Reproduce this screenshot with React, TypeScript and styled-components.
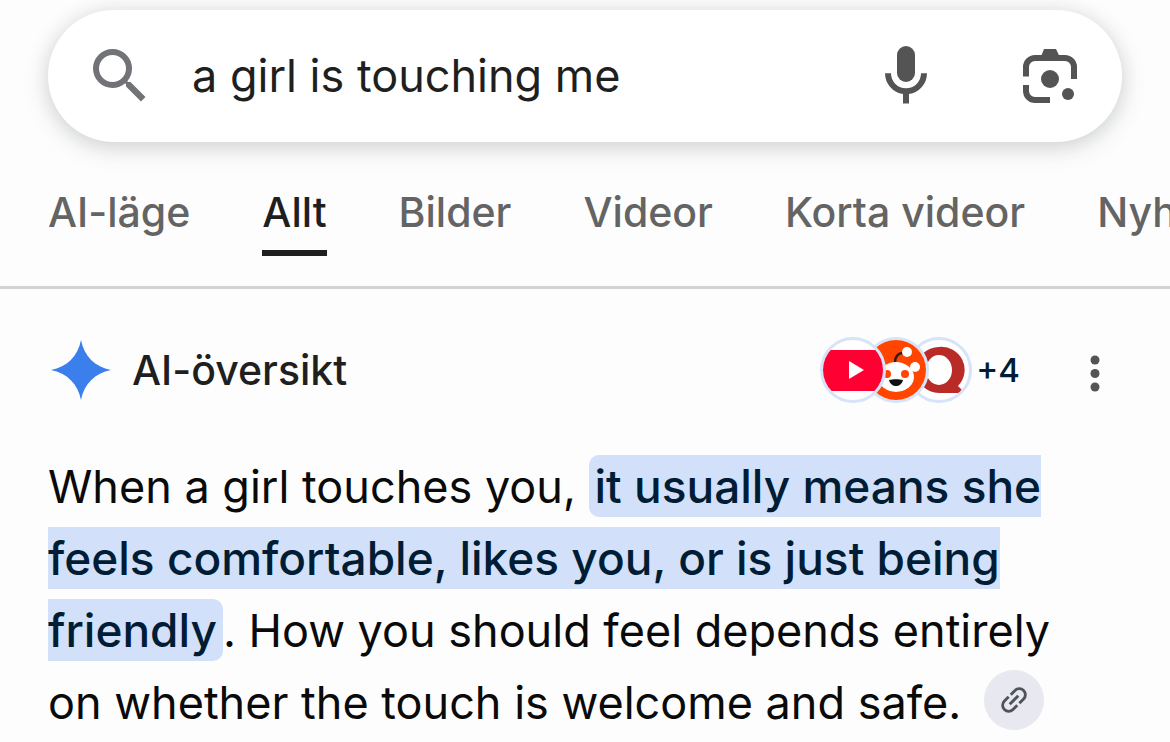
import React, { useState } from "react";
import styled, { createGlobalStyle } from "styled-components";

const GlobalStyle = createGlobalStyle`
  * { box-sizing: border-box; }
  body {
    margin: 0;
    background: #fdfdfd;
    color: #0a0a0a;
    font-family: Inter, Roboto, sans-serif;
    overflow-x: hidden;
  }
`;

const Page = styled.div`
  padding-top: 10px;
`;

const SearchBar = styled.form`
  display: flex;
  align-items: center;
  height: 132px;
  margin: 0 48px;
  padding: 0 36px;
  border-radius: 66px;
  background: #fff;
  box-shadow: 0 6px 24px rgba(60, 64, 67, 0.2), 0 0 18px rgba(60, 64, 67, 0.07);
`;

const IconButton = styled.button<{ $color?: string }>`
  display: flex;
  flex: none;
  padding: 0;
  border: 0;
  background: none;
  color: ${(p) => p.$color ?? "#545454"};
  cursor: pointer;
`;

const Glyph = styled.svg<{ $size: number }>`
  display: block;
  width: ${(p) => p.$size}px;
  height: ${(p) => p.$size}px;
  fill: currentColor;
`;

const Query = styled.input`
  flex: 1;
  min-width: 0;
  height: 72px;
  margin: 0 36px;
  padding: 0 0 2px;
  border: 0;
  outline: 0;
  background: transparent;
  color: #1f1f1f;
  font: 400 45px Inter, Roboto, sans-serif;
`;

const BarActions = styled.div`
  display: flex;
  gap: 72px;
`;

const Tabs = styled.nav`
  display: flex;
  gap: 72px;
  height: 147px;
  padding: 42px 48px 0;
  border-bottom: 3px solid #d2d2d2;
  overflow: hidden;
`;

const Tab = styled.a<{ $active?: boolean }>`
  flex: none;
  height: 72px;
  border-bottom: 6px solid ${(p) => (p.$active ? "#1f1f1f" : "transparent")};
  color: ${(p) => (p.$active ? "#1f1f1f" : "#646464")};
  font-size: 41px;
  font-weight: 500;
  line-height: 56px;
  text-decoration: none;
  white-space: nowrap;
`;

const Overview = styled.section`
  padding: 48px 48px 0;
`;

const Header = styled.header`
  display: flex;
  align-items: center;
  height: 66px;
  margin-bottom: 48px;
`;

const Title = styled.h2`
  flex: 1;
  margin: 0 0 0 18px;
  color: #1f1f1f;
  font-size: 41px;
  font-weight: 500;
  line-height: 60px;
`;

const Sources = styled.button`
  display: flex;
  align-items: center;
  padding: 0;
  border: 0;
  background: none;
  color: #001d35;
  font: 500 33px Inter, Roboto, sans-serif;
  cursor: pointer;
`;

const Favicon = styled.span<{ $order: number }>`
  position: relative;
  z-index: ${(p) => p.$order};
  width: 66px;
  height: 66px;
  margin-right: -23px;
  border: 3px solid #d6e3f8;
  border-radius: 50%;
  background: #fff;
  overflow: hidden;
`;

const More = styled.span`
  margin-left: 27px;
`;

const MenuButton = styled(IconButton)`
  margin-left: 48px;
`;

const Answer = styled.p`
  margin: 0;
  font-size: 45px;
  line-height: 72px;
`;

const Highlight = styled.strong`
  padding: 3px 6px;
  border-radius: 10px;
  background: #d2e1f9;
  color: #001d35;
  font-size: 46px;
  font-weight: 500;
  line-height: 60px;
`;

const Cite = styled.button`
  display: inline-flex;
  align-items: center;
  justify-content: center;
  width: 60px;
  height: 60px;
  margin: 3px 0 0 23px;
  padding: 0;
  border: 0;
  border-radius: 50%;
  background: #e7e8f0;
  color: #505358;
  vertical-align: top;
  cursor: pointer;
`;

const tabs = ["AI-läge", "Allt", "Bilder", "Videor", "Korta videor", "Nyheter"];

const YouTube = () => (
  <Glyph $size={60} viewBox="0 0 60 60">
    <rect x="-2" y="10" width="64" height="41" rx="9" fill="#ff0033" />
    <path d="M26 21v18l15-9z" fill="#fff" />
  </Glyph>
);

const Reddit = () => (
  <Glyph $size={60} viewBox="0 0 60 60">
    <rect width="60" height="60" fill="#ff4500" />
    <circle cx="11" cy="27" r="5" fill="#fff" />
    <circle cx="49" cy="27" r="5" fill="#fff" />
    <ellipse cx="30" cy="37" rx="18" ry="15" fill="#fff" />
    <path d="M29 22c0-5 3-9 8-9" fill="none" stroke="#3a1a10" strokeWidth="2.5" />
    <circle cx="41" cy="12" r="5" fill="#fff" />
    <circle cx="21" cy="34" r="4" fill="#ff4500" />
    <circle cx="39" cy="34" r="4" fill="#ff4500" />
    <path d="M23 40c4-1 10-1 14 0-1 4-4 6-7 6s-6-2-7-6z" fill="#111" />
  </Glyph>
);

const Quora = () => (
  <Glyph $size={60} viewBox="0 0 60 60">
    <path d="M30 7a23 23 0 1 0 0 46h21q3 0 2-3l-4-4A23 23 0 0 0 30 7z" fill="#b92b27" />
    <ellipse cx="30" cy="30" rx="13" ry="15" fill="#fff" />
  </Glyph>
);

export default function App() {
  const [query, setQuery] = useState("a girl is touching me");
  return (
    <>
      <GlobalStyle />
      <Page>
        <SearchBar role="search" onSubmit={(e) => e.preventDefault()}>
          <IconButton type="submit" aria-label="Sök" $color="#727376">
            <Glyph $size={72} viewBox="0 0 24 24">
              <path d="M15.5 14h-.79l-.28-.27A6.47 6.47 0 0 0 16 9.5 6.5 6.5 0 1 0 9.5 16c1.61 0 3.09-.59 4.23-1.57l.27.28v.79l5 4.99L20.49 19l-4.99-5zm-6 0a4.5 4.5 0 1 1 0-9 4.5 4.5 0 0 1 0 9z" />
            </Glyph>
          </IconButton>
          <Query
            type="text"
            aria-label="Sökfråga"
            value={query}
            onChange={(e) => setQuery(e.target.value)}
          />
          <BarActions>
            <IconButton type="button" aria-label="Röstsökning">
              <Glyph $size={72} viewBox="0 0 24 24">
                <rect x="9" y="2" width="6" height="12" rx="3" />
                <path d="M5 11.1h2a5 5 0 0 0 10 0h2a7 7 0 0 1-6 6.9v3.2h-2V18a7 7 0 0 1-6-6.900z" />
              </Glyph>
            </IconButton>
            <IconButton type="button" aria-label="Bildsökning">
              <Glyph $size={72} viewBox="0 0 24 24">
                <path d="M9 5.5 10 3h4l1.200 2.500z" />
                <path
                  d="M4 12.200V9a3 3 0 0 1 3-3h10a3 3 0 0 1 3 3v4M4 15v2a3 3 0 0 0 3 3h5"
                  fill="none"
                  stroke="currentColor"
                  strokeWidth="2"
                />
                <circle cx="12" cy="13" r="3" />
                <circle cx="18" cy="18" r="2" />
              </Glyph>
            </IconButton>
          </BarActions>
        </SearchBar>

        <Tabs aria-label="Sökfilter">
          {tabs.map((name) => (
            <Tab key={name} href="#" $active={name === "Allt"}>
              {name}
            </Tab>
          ))}
        </Tabs>

        <Overview>
          <Header>
            <Glyph $size={66} viewBox="0 0 66 66" aria-hidden="true">
              <path
                d="M33 3C36 19 47 30 63 33 47 36 36 47 33 63 30 47 19 36 3 33 19 30 30 19 33 3z"
                fill="#3b7fec"
              />
            </Glyph>
            <Title>AI-översikt</Title>
            <Sources type="button" aria-label="Visa källor, 4 till">
              <Favicon $order={3}>
                <YouTube />
              </Favicon>
              <Favicon $order={2}>
                <Reddit />
              </Favicon>
              <Favicon $order={1}>
                <Quora />
              </Favicon>
              <More>+4</More>
            </Sources>
            <MenuButton type="button" aria-label="Fler alternativ">
              <Glyph $size={54} viewBox="0 0 54 54">
                <circle cx="27" cy="17" r="4.5" />
                <circle cx="27" cy="30.5" r="4.5" />
                <circle cx="27" cy="44" r="4.5" />
              </Glyph>
            </MenuButton>
          </Header>

          <Answer>
            When a girl touches you, <Highlight>
              it usually means she
              <br />
              feels comfortable, likes you, or is just being
              <br />
              friendly
            </Highlight>
            . How you should feel depends entirely
            <br />
            on whether the touch is welcome and safe.
            <Cite type="button" aria-label="Visa källa">
              <Glyph $size={36} viewBox="0 0 24 24">
                <path
                  transform="rotate(-45 12 12)"
                  d="M3.9 12A3.1 3.1 0 0 1 7 8.9h4V7H7a5 5 0 0 0 0 10h4v-1.900H7A3.100 3.100 0 0 1 3.900 12zM8 13h8v-2H8zm9-6h-4v1.900h4a3.100 3.100 0 0 1 0 6.200h-4V17h4a5 5 0 0 0 0-10z"
                />
              </Glyph>
            </Cite>
          </Answer>
        </Overview>
      </Page>
    </>
  );
}
